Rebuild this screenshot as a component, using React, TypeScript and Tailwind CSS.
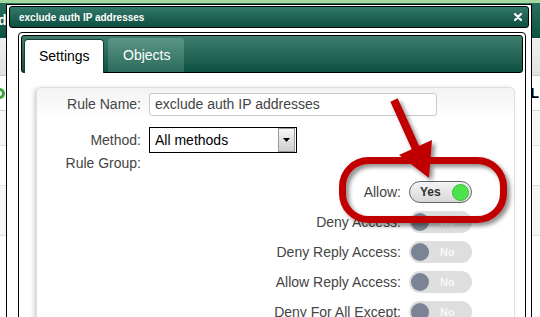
import React from 'react';

const font = { fontFamily: '"Liberation Sans", Arial, sans-serif' };

const Toggle = ({ on }: { on: boolean }) =>
  on ? (
    <div className="flex h-[22px] w-[63px] items-center justify-between rounded-full border border-[#666] bg-gradient-to-b from-[#f4f4f4] to-[#d8d8d8] pl-[10px] pr-[2px]">
      <span className="text-[12px] font-bold leading-none text-[#333]">Yes</span>
      <span className="h-[17px] w-[17px] rounded-full border border-[#3dbb3d] bg-[#4de34d]" />
    </div>
  ) : (
    <div className="flex h-[22px] w-[63px] items-center rounded-full bg-[#dedede] pl-[2px]">
      <span className="h-[18px] w-[18px] rounded-full bg-[#7a8494]" />
      <span className="ml-[11px] text-[11px] font-bold leading-none text-[#f7f7f7]">No</span>
    </div>
  );

const toggleRows = [
  { label: 'Allow:', on: true },
  { label: 'Deny Access:', on: false },
  { label: 'Deny Reply Access:', on: false },
  { label: 'Allow Reply Access:', on: false },
  { label: 'Deny For All Except:', on: false },
];

const Annotation = () => (
  <svg className="pointer-events-none absolute left-0 top-0" width="540" height="317" viewBox="0 0 540 317">
    <defs>
      <filter id="sh" x="-20%" y="-20%" width="140%" height="140%">
        <feDropShadow dx="3" dy="3" stdDeviation="2" floodColor="#000" floodOpacity="0.45" />
      </filter>
    </defs>
    <g filter="url(#sh)">
      <rect x="342.5" y="160.5" width="161" height="59" rx="26" fill="none" stroke="#c00000" strokeWidth="7" />
      <line x1="394" y1="100" x2="417" y2="151" stroke="#c00000" strokeWidth="8" />
      <polygon points="399,155 432,140 429,178" fill="#c00000" />
    </g>
  </svg>
);

export default function App() {
  return (
    <div className="relative h-[317px] w-[540px] overflow-hidden bg-white" style={font}>
      {/* page behind the dialog */}
      <div className="h-[3px] bg-[#a3d9a0]" />
      <div className="flex h-[35px] items-center justify-between bg-gradient-to-b from-[#2a6e5f] to-[#0b5141] text-[14px] font-bold text-white">
        <span className="-ml-[2px]">d</span>
      </div>
      <div className="h-[38px] border-b border-[#c8c8c8] bg-gradient-to-b from-[#f0f0f0] to-[#e2e2e2]" />
      <div className="flex h-[35px] items-center justify-between border-b border-[#d4d4d4] px-0">
        <span className="-ml-[6px] h-[11px] w-[11px] rounded-full border-[3px] border-[#3aa53a]" />
        <span className="mr-[1px] text-[14px] font-bold text-black">L</span>
      </div>
      <div className="h-[35px] border-b border-[#e2e2e2] bg-[#f6f6f6]" />
      <div className="h-[40px] border-b border-[#e2e2e2] bg-white" />
      <div className="h-[50px] border-b border-[#e2e2e2] bg-[#f6f6f6]" />

      {/* dialog */}
      <div className="absolute left-[6px] top-[4px] h-[330px] w-[526px] border border-black bg-white px-[2px] pt-[1px]">
        <div className="flex h-[22px] items-center justify-between rounded-[3px] border border-black bg-gradient-to-b from-[#33796a] to-[#0a4f40] pl-[9px] pr-[6px]">
          <span className="text-[10px] font-bold text-white">exclude auth IP addresses</span>
          <svg width="8" height="8" viewBox="0 0 8 8">
            <path d="M1 1 L7 7 M7 1 L1 7" stroke="#fff" strokeWidth="2.2" strokeLinecap="round" />
          </svg>
        </div>

        <div className="ml-[9px] mt-[4px] h-[300px] w-[508px] rounded-[4px] border border-black p-[2px]">
          <div className="flex h-[38px] items-end gap-[4px] rounded-[3px] border border-black bg-gradient-to-b from-[#3f7f70] to-[#0b5141] pl-[2px]">
            <div className="-mb-px flex h-[34px] w-[80px] items-center rounded-t-[4px] border border-b-0 border-[#1d3d35] bg-white pl-[14px] text-[14px] text-black">
              Settings
            </div>
            <div className="flex h-[34px] w-[76px] items-center rounded-t-[4px] bg-gradient-to-b from-[#5a9686] to-[#2b6b5b] pl-[15px] text-[14px] text-white">
              Objects
            </div>
          </div>

          <div className="ml-[15px] mt-[14px] h-[260px] w-[479px] rounded-[5px] border border-[#dedede] bg-gradient-to-b from-[#f3f3f3] to-white to-[12%] pt-[5px] shadow-[-2px_1px_4px_rgba(0,0,0,0.18)]">
            <div className="flex h-[23px] items-center">
              <span className="w-[104px] text-right text-[14px] text-[#444]">Rule Name:</span>
              <div className="ml-[8px] flex h-[23px] w-[288px] items-center rounded-[3px] border border-[#c9c9c9] bg-white pl-[5px] text-[14px] text-[#444]">
                exclude auth IP addresses
              </div>
            </div>
            <div className="mt-[11px] flex h-[26px] items-center">
              <span className="w-[104px] text-right text-[14px] text-[#444]">Method:</span>
              <div className="ml-[8px] flex h-[26px] w-[148px] items-center justify-between border border-black bg-white pl-[5px] pr-px text-[14px] text-black">
                All methods
                <span className="flex h-[24px] w-[17px] items-center justify-center border border-[#999] bg-gradient-to-b from-[#f6f6f6] to-[#cfcfcf]">
                  <svg width="7" height="4" viewBox="0 0 7 4">
                    <path d="M0 0 H7 L3.5 4 Z" fill="#000" />
                  </svg>
                </span>
              </div>
            </div>
            <div className="mt-[2px] flex h-[16px] items-center">
              <span className="w-[104px] text-right text-[14px] text-[#444]">Rule Group:</span>
            </div>
            <div className="mt-[6px] flex flex-col">
              {toggleRows.map((row) => (
                <div key={row.label} className="flex h-[30px] items-center">
                  <span className="w-[364px] text-right text-[14px] text-[#444]">{row.label}</span>
                  <div className="ml-[8px]">
                    <Toggle on={row.on} />
                  </div>
                </div>
              ))}
            </div>
          </div>
        </div>
      </div>

      <Annotation />
    </div>
  );
}
